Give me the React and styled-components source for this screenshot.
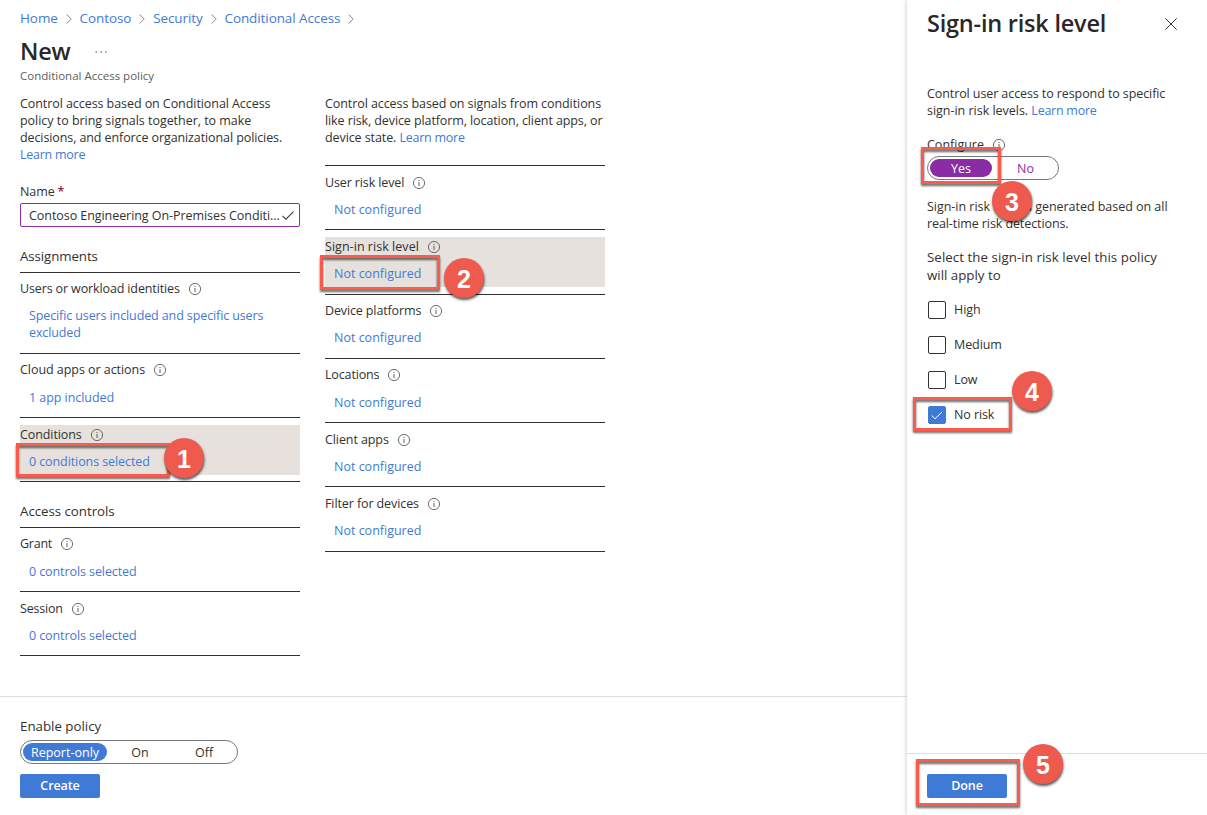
import React from "react";
import styled, { createGlobalStyle } from "styled-components";

const Global = createGlobalStyle`
  *, *::before, *::after { box-sizing: border-box; }
  html, body { margin: 0; padding: 0; background: #fff; overflow: hidden; }
  body {
    font-family: "Open Sans", "Noto Sans", sans-serif;
    font-size: 12.5px;
    line-height: 17px;
    color: #323130;
  }
  h1, h2, p { margin: 0; }
`;

const Page = styled.div`
  position: relative;
  display: flex;
  width: 1207px;
  height: 815px;
  overflow: hidden;
  background: #fff;
`;

const Text = styled.span`
  display: ${(p) => (p.$block ? "block" : "inline-block")};
  white-space: pre;
  letter-spacing: ${(p) => p.$ls ?? -0.09}px;
`;

const Link = styled(Text).attrs({ as: "a" })`
  color: #3f7ad6;
`;

const Main = styled.main`
  flex: 1;
  min-width: 0;
  display: flex;
  flex-direction: column;
`;

const Breadcrumb = styled.nav`
  display: flex;
  align-items: center;
  height: 20px;
  margin-top: 8px;
  padding-left: 20px;
  font-size: 13.5px;
`;

const Chevron = styled.svg`
  width: 6px;
  height: 10px;
  margin: 2px 7.8px 0 8px;
  fill: none;
  stroke: #8a8886;
`;

const TitleRow = styled.header`
  display: flex;
  align-items: center;
  height: 36px;
  margin-top: 5px;
  padding-left: 20px;
`;

const Title = styled.h1`
  font-size: 23.5px;
  line-height: 32px;
  font-weight: 600;
  letter-spacing: -0.22px;
  white-space: nowrap;
  color: #292827;
`;

const More = styled.svg`
  width: 12px;
  height: 4px;
  margin: 2px 0 0 25px;
  fill: #605e5c;
`;

const Subtitle = styled.p`
  height: 16px;
  margin-top: -1px;
  padding-left: 20px;
  font-size: 11.5px;
  line-height: 16px;
  color: #605e5c;
`;

const Columns = styled.div`
  display: flex;
  gap: 25px;
  margin-top: 11px;
  padding-left: 20px;
`;

const Column = styled.section`
  width: 280px;
`;

const Rows = styled.div`
  margin-top: ${(p) => p.$top}px;
  border-top: 1px solid #323130;
`;

const Row = styled.div`
  height: ${(p) => p.$height}px;
  padding: 7px 0 6px;
  border-bottom: 1px solid #323130;
`;

const RowBody = styled.div`
  height: 50px;
  padding-top: ${(p) => p.$inset}px;
  background: ${(p) => (p.$active ? "#e6e1dd" : "transparent")};
`;

const RowLabel = styled.div`
  display: flex;
  align-items: center;
  height: 17px;
`;

const RowLinks = styled.div`
  margin-top: ${(p) => p.$gap}px;
  padding-left: 9px;
`;

const Info = styled.svg`
  flex: none;
  width: 12px;
  height: 12px;
  margin-left: 9px;
  fill: none;
  stroke: #605e5c;
  overflow: visible;
`;

const NameLabel = styled.div`
  margin-top: 20px;
  height: 17px;
`;

const Required = styled.span`
  margin-left: 3px;
  color: #a4262c;
  font-weight: 600;
`;

const NameField = styled.div`
  display: flex;
  align-items: center;
  justify-content: space-between;
  height: 24px;
  margin-top: 3px;
  padding: 0 5px 0 8px;
  border: 1px solid #8a2da5;
  border-radius: 2px;
`;

const Tick = styled.svg`
  flex: none;
  fill: none;
  stroke: ${(p) => p.$color};
  stroke-width: ${(p) => p.$weight ?? 1};
`;

const SectionTitle = styled.div`
  height: 17px;
  margin-top: 21px;
  font-size: 13.3px;
`;

const Footer = styled.footer`
  margin-top: auto;
  height: 119px;
  padding: 21px 0 0 20px;
  border-top: 1px solid #e1dfdd;
`;

const FooterLabel = styled.div`
  height: 17px;
  font-size: 13.3px;
`;

const Toggle = styled.div`
  display: flex;
  width: ${(p) => p.$width}px;
  height: 24px;
  margin-top: ${(p) => p.$top ?? 0}px;
  padding: 2px;
  border: 1px solid #7a7876;
  border-radius: 12px;
`;

const Segment = styled.div`
  display: flex;
  flex: none;
  align-items: center;
  justify-content: center;
  width: ${(p) => p.$width}px;
  height: 18px;
  border-radius: 9px;
  color: ${(p) => p.$color ?? "#323130"};
  background: ${(p) => p.$fill ?? "transparent"};
`;

const Button = styled.button`
  display: flex;
  align-items: flex-start;
  justify-content: center;
  width: 80px;
  height: 24px;
  margin: ${(p) => p.$top}px 0 0;
  padding: 3px 0 0;
  border: 0;
  border-radius: 2px;
  background: #3f7ad6;
  color: #fff;
  font: 600 12.5px/17px "Open Sans", "Noto Sans", sans-serif;
`;

const Panel = styled.aside`
  display: flex;
  flex-direction: column;
  width: 300px;
  background: #fff;
  box-shadow: 0 0 5px rgba(60, 80, 75, 0.32);
`;

const PanelBody = styled.div`
  flex: 1;
  padding: 0 20px;
`;

const PanelHeader = styled.header`
  display: flex;
  align-items: center;
  justify-content: space-between;
  height: 32px;
  margin: 7px 10px 0 0;
`;

const Close = styled.svg`
  width: 12px;
  height: 12px;
  margin-top: 2px;
  fill: none;
  stroke: #323130;
`;

const Paragraph = styled.p`
  margin-top: ${(p) => p.$top ?? 0}px;
`;

const Prompt = styled.p`
  margin-top: 16px;
  font-size: 13.3px;
  line-height: 18px;
`;

const ConfigureLabel = styled.div`
  display: flex;
  align-items: center;
  height: 17px;
  margin-top: 17px;
`;

const Options = styled.div`
  display: flex;
  flex-direction: column;
  gap: 17px;
  margin: 17px 0 0 1px;
`;

const Option = styled.label`
  display: flex;
  align-items: flex-start;
  gap: 8px;
  height: 18px;
`;

const Box = styled.span`
  display: flex;
  align-items: center;
  justify-content: center;
  width: 18px;
  height: 18px;
  border: 1px solid ${(p) => (p.$checked ? "#3f7ad6" : "#323130")};
  border-radius: 2px;
  background: ${(p) => (p.$checked ? "#3f7ad6" : "#fff")};
`;

const PanelFooter = styled.footer`
  height: 62px;
  padding: 0 20px;
  border-top: 1px solid #e1dfdd;
`;

const Highlight = styled.div`
  position: absolute;
  left: ${(p) => p.$x}px;
  top: ${(p) => p.$y}px;
  width: ${(p) => p.$w}px;
  height: ${(p) => p.$h}px;
  border: 3px solid #fb5b4c;
  filter: drop-shadow(0.5px 2px 1px rgba(0, 0, 0, 0.6));
`;

const Badge = styled.div`
  position: absolute;
  left: ${(p) => p.$x}px;
  top: ${(p) => p.$y}px;
  display: flex;
  align-items: center;
  justify-content: center;
  width: 40px;
  height: 40px;
  padding-top: 2px;
  border-radius: 50%;
  background: #ef5a4e;
  box-shadow: 0.5px 2px 2.5px rgba(0, 0, 0, 0.65);
  color: #fff;
  font: 700 25px/38px "Liberation Sans", sans-serif;
`;

const InfoIcon = () => (
  <Info viewBox="0 0 12 12">
    <circle cx="6" cy="6" r="5.6" strokeWidth="0.9" />
    <path d="M6 5v4M6 2.9v1.1" strokeWidth="1" />
  </Info>
);

const Crumb = ({ children }) => (
  <>
    <Link>{children}</Link>
    <Chevron viewBox="0 0 6 10">
      <path d="M0.7 0.5L5.2 5L0.7 9.5" />
    </Chevron>
  </>
);

const SettingRow = ({ label, ls, links, linkLs, active, height = 64, inset = 0, gap = 10 }) => (
  <Row $height={height}>
    <RowBody $active={active} $inset={inset}>
      <RowLabel>
        <Text $ls={ls}>{label}</Text>
        <InfoIcon />
      </RowLabel>
      <RowLinks $gap={gap}>
        {links.map((line) => (
          <Link key={line} $block $ls={linkLs}>{line}</Link>
        ))}
      </RowLinks>
    </RowBody>
  </Row>
);

const signals = [
  { label: "User risk level", ls: -0.12, inset: 1 },
  { label: "Sign-in risk level", ls: 0.04, inset: 1, height: 65, active: true },
  { label: "Device platforms", ls: -0.13 },
  { label: "Locations", ls: -0.15, gap: 11 },
  { label: "Client apps", ls: -0.09, inset: 1 },
  { label: "Filter for devices", ls: -0.1, inset: 1, height: 65 },
];
const levels = ["High", "Medium", "Low", "No risk"];

const marks = [
  { box: [16, 443, 154, 34], badge: [164, 438] },
  { box: [320, 255, 120, 35], badge: [444, 258] },
  { box: [921, 147, 80, 37], badge: [992, 181] },
  { box: [913, 397, 99, 34], badge: [1012, 371] },
  { box: [916, 759, 104, 47], badge: [1023, 744] },
];

export default function App() {
  return (
    <Page>
      <Global />
      <Main>
        <Breadcrumb>
          <Crumb>Home</Crumb>
          <Crumb>Contoso</Crumb>
          <Crumb>Security</Crumb>
          <Crumb>Conditional Access</Crumb>
        </Breadcrumb>
        <TitleRow>
          <Title>New</Title>
          <More viewBox="0 0 12 4">
            <circle cx="1.2" cy="2" r="0.8" />
            <circle cx="6" cy="2" r="0.8" />
            <circle cx="10.8" cy="2" r="0.8" />
          </More>
        </TitleRow>
        <Subtitle><Text $ls={0}>Conditional Access policy</Text></Subtitle>
        <Columns>
          <Column>
            <Text $block $ls={-0.07}>Control access based on Conditional Access</Text>
            <Text $block $ls={-0.03}>policy to bring signals together, to make</Text>
            <Text $block $ls={-0.1}>decisions, and enforce organizational policies.</Text>
            <Link $block $ls={-0.25}>Learn more</Link>
            <NameLabel>
              <Text>Name</Text>
              <Required>*</Required>
            </NameLabel>
            <NameField>
              <Text $ls={-0.06}>Contoso Engineering On-Premises Conditi...</Text>
              <Tick width="12" height="9" viewBox="0 0 12 9" $color="#484644" $weight={1.2}>
                <path d="M0.5 4.8L3.9 8.2L11.5 0.6" />
              </Tick>
            </NameField>
            <SectionTitle><Text>Assignments</Text></SectionTitle>
            <Rows $top={7}>
              <SettingRow label="Users or workload identities" ls={-0.13} links={["Specific users included and specific users", "excluded"]} linkLs={-0.11} height={81} />
              <SettingRow label="Cloud apps or actions" ls={-0.05} links={["1 app included"]} linkLs={-0.05} gap={11} />
              <SettingRow label="Conditions" links={["0 conditions selected"]} inset={1} active />
            </Rows>
            <SectionTitle><Text $ls={-0.03}>Access controls</Text></SectionTitle>
            <Rows $top={7}>
              <SettingRow label="Grant" ls={-0.25} links={["0 controls selected"]} gap={11} />
              <SettingRow label="Session" ls={-0.2} links={["0 controls selected"]} inset={1} />
            </Rows>
          </Column>
          <Column>
            <Text $block $ls={-0.08}>Control access based on signals from conditions</Text>
            <Text $block $ls={-0.1}>like risk, device platform, location, client apps, or</Text>
            <Text>device state. </Text>
            <Link $ls={-0.25}>Learn more</Link>
            <Rows $top={19}>
              {signals.map((signal) => (
                <SettingRow key={signal.label} {...signal} links={["Not configured"]} linkLs={0} />
              ))}
            </Rows>
          </Column>
        </Columns>
        <Footer>
          <FooterLabel><Text $ls={0}>Enable policy</Text></FooterLabel>
          <Toggle $width={218} $top={5}>
            <Segment $width={84} $fill="#3f7ad6" $color="#fff"><Text $ls={0}>Report-only</Text></Segment>
            <Segment $width={66}><Text $ls={0}>On</Text></Segment>
            <Segment $width={62}><Text $ls={0}>Off</Text></Segment>
          </Toggle>
          <Button $top={10}><Text>Create</Text></Button>
        </Footer>
      </Main>
      <Panel>
        <PanelBody>
          <PanelHeader>
            <Title as="h2">Sign-in risk level</Title>
            <Close viewBox="0 0 12 12"><path d="M0.3 0.3L11.7 11.7M11.7 0.3L0.3 11.7" /></Close>
          </PanelHeader>
          <Paragraph $top={46}>
            <Text $block>Control user access to respond to specific</Text>
            <Text $ls={-0.02}>sign-in risk levels. </Text>
            <Link $ls={-0.25}>Learn more</Link>
          </Paragraph>
          <ConfigureLabel>
            <Text $ls={0}>Configure</Text>
            <InfoIcon />
          </ConfigureLabel>
          <Toggle $width={132} $top={3}>
            <Segment $width={62} $fill="#8a2da5" $color="#fff"><Text $ls={0}>Yes</Text></Segment>
            <Segment $width={67} $color="#8a2da5"><Text $ls={0}>No</Text></Segment>
          </Toggle>
          <Paragraph $top={18}>
            <Text $block $ls={-0.03}>Sign-in risk level is generated based on all</Text>
            <Text $block>real-time risk detections.</Text>
          </Paragraph>
          <Prompt>
            <Text $block $ls={0.06}>Select the sign-in risk level this policy</Text>
            <Text $block $ls={0}>will apply to</Text>
          </Prompt>
          <Options>
            {levels.map((level) => (
              <Option key={level}>
                <Box $checked={level === "No risk"}>
                  {level === "No risk" && (
                    <Tick width="12" height="9" viewBox="0 0 12 9" $color="#fff">
                      <path d="M0.7 4.5L4 7.8L11.2 0.8" />
                    </Tick>
                  )}
                </Box>
                <Text>{level}</Text>
              </Option>
            ))}
          </Options>
        </PanelBody>
        <PanelFooter>
          <Button $top={20}><Text>Done</Text></Button>
        </PanelFooter>
      </Panel>
      {marks.map(({ box, badge }, i) => (
        <React.Fragment key={i}>
          <Highlight $x={box[0]} $y={box[1]} $w={box[2]} $h={box[3]} />
          <Badge $x={badge[0]} $y={badge[1]}>{i + 1}</Badge>
        </React.Fragment>
      ))}
    </Page>
  );
}
